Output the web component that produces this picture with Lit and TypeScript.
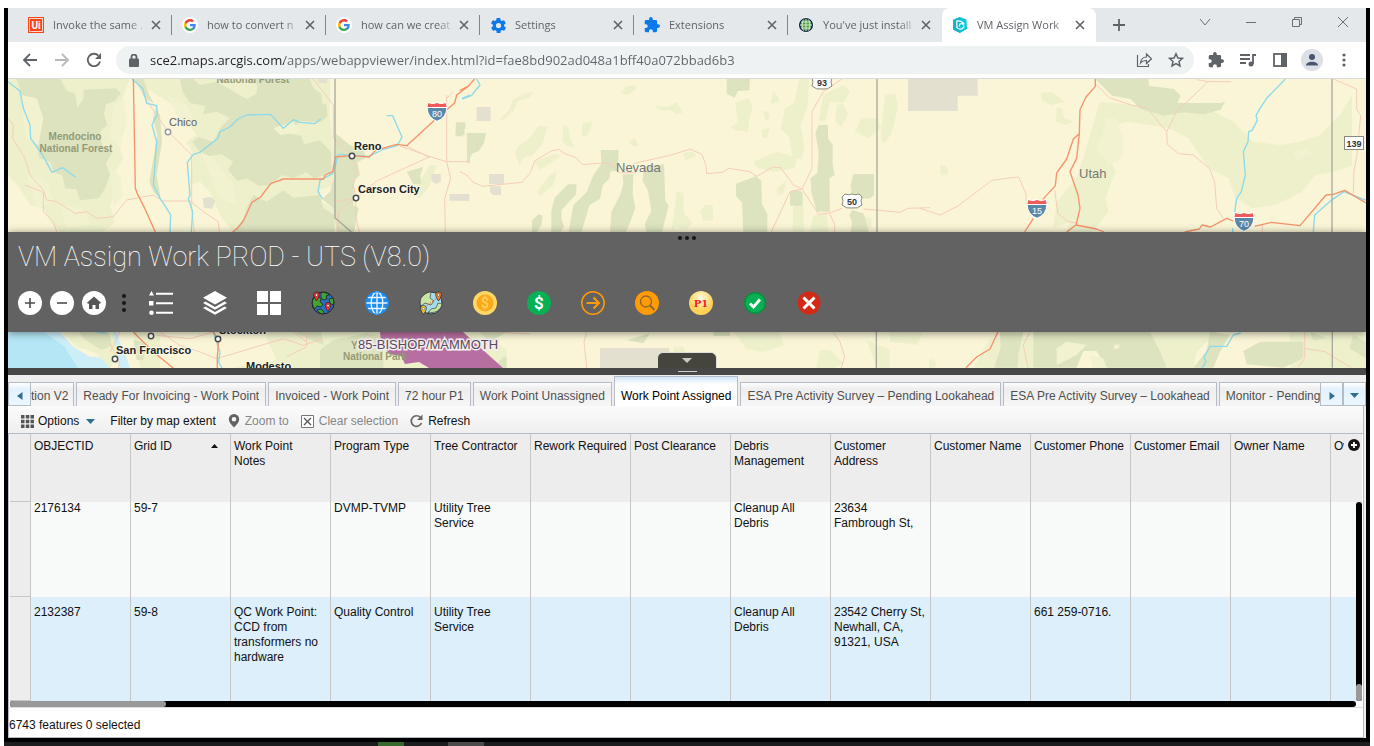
import { LitElement, html, svg, css } from "lit";
import { customElement } from "lit/decorators.js";
import { classMap } from "lit/directives/class-map.js";

/* ---------- browser chrome glyphs ---------- */

const close16 = html`<svg class="x" viewBox="0 0 16 16" width="16" height="16"><path d="M4 4l8 8M12 4l-8 8" /></svg>`;

const favicons: Record<string, unknown> = {
  uipath: html`<svg viewBox="0 0 16 16" width="16" height="16"><rect width="16" height="16" fill="#fa4616" /><rect x="1.5" y="1.5" width="13" height="13" fill="none" stroke="#fff" stroke-width=".8" /><text x="8" y="11.500" text-anchor="middle" font-family="Roboto, sans-serif" font-weight="700" font-size="10" fill="#fff">Ui</text></svg>`,
  google: html`<svg viewBox="0 0 16 16" width="16" height="16"><circle cx="8" cy="8" r="8" fill="#fff" /><g transform="translate(2 2) scale(.25)"><path fill="#4285f4" d="M47 24.5c0-1.6-.2-3.100-.4-4.500H24v9h13c-.6 3-2.300 5.500-4.800 7.200v6h7.700C44.400 38 47 31.800 47 24.500z" /><path fill="#34a853" d="M24 48c6.500 0 11.900-2.100 15.900-5.800l-7.700-6c-2.200 1.500-4.900 2.300-8.200 2.300-6.300 0-11.600-4.200-13.500-9.900H2.600v6.200C6.500 42.600 14.600 48 24 48z" /><path fill="#fbbc05" d="M10.500 28.600c-1-3-1-6.200 0-9.200v-6.200H2.600c-3.400 6.800-3.400 14.800 0 21.600z" /><path fill="#ea4335" d="M24 9.500c3.500 0 6.700 1.200 9.200 3.600l6.900-6.900C35.900 2.400 30.500 0 24 0 14.600 0 6.500 5.400 2.600 13.200l7.900 6.200C12.400 13.700 17.700 9.500 24 9.500z" /></g></svg>`,
  gear: html`<svg viewBox="2 2 20 20" width="15" height="15"><path fill="#0b78ec" d="M19.400 13c0-.3.100-.6.100-1s0-.7-.1-1l2.100-1.600c.2-.2.200-.4.100-.6l-2-3.500c-.1-.2-.4-.3-.6-.2l-2.500 1c-.5-.4-1.100-.7-1.700-1l-.4-2.600c0-.3-.2-.5-.5-.5h-4c-.2 0-.5.2-.5.400l-.4 2.700c-.6.2-1.100.6-1.700 1l-2.500-1c-.2-.1-.5 0-.6.2l-2 3.500c-.1.200-.1.500.1.600L4.600 11c0 .3-.1.700-.1 1s0 .7.100 1l-2.100 1.600c-.2.200-.2.400-.1.600l2 3.500c.1.200.4.300.6.200l2.500-1c.5.400 1.100.7 1.700 1l.4 2.600c0 .3.3.5.5.5h4c.2 0 .5-.2.5-.4l.4-2.700c.6-.2 1.100-.6 1.700-1l2.500 1c.2.100.5 0 .6-.2l2-3.500c.1-.2.1-.5-.1-.6zM12 15.500a3.500 3.500 0 110-7 3.500 3.500 0 010 7z" /></svg>`,
  puzzle: html`<svg viewBox="1 1 22 22" width="16" height="16"><path fill="#0b78ec" d="M20.500 11H19V7a2 2 0 00-2-2h-4V3.500a2.500 2.500 0 00-5 0V5H4a2 2 0 00-2 2v3.800h1.500a2.700 2.700 0 010 5.400H2V20a2 2 0 002 2h3.800v-1.500a2.700 2.700 0 015.400 0V22H17a2 2 0 002-2v-4h1.500a2.500 2.500 0 000-5z" /></svg>`,
  globe: html`<svg viewBox="0 0 16 16" width="16" height="16"><circle cx="8" cy="8" r="7.700" fill="#f4f7f2" /><circle cx="8" cy="8" r="6.300" fill="#4e9a45" stroke="#10284a" stroke-width="1.600" /><path d="M8 2v12M2 8h12M3.200 5h9.600M3.200 11h9.600M5.400 2.600c-1.700 3-1.700 8 0 11M10.600 2.600c1.700 3 1.700 8 0 11" stroke="#dff0d8" stroke-width=".9" fill="none" /></svg>`,
  arcgis: html`<svg viewBox="0 0 16 16" width="16" height="16"><path d="M8 0l6.500 2.500L15 12l-7 4-7-3.500L1 3z" fill="#0cc5dc" /><path d="M1 3l7-3v16l-7-3.500z" fill="#18b2cc" /><path d="M4.800 3.500v6.800c1.700 2.700 6 2.300 7 -.6.600-2.300-2.200-3.900-4.200-2.400l-.4 2.400M4.800 4c3-.4 5.800.8 7.400 3.200" fill="none" stroke="#fff" stroke-width="1.200" /></svg>`,
};

const browserTabs = [
  { icon: "uipath", title: "Invoke the same .", active: false },
  { icon: "google", title: "how to convert n", active: false },
  { icon: "google", title: "how can we creat", active: false },
  { icon: "gear", title: "Settings", active: false },
  { icon: "puzzle", title: "Extensions", active: false },
  { icon: "globe", title: "You've just install", active: false },
  { icon: "arcgis", title: "VM Assign Work", active: true },
];

@customElement("browser-bar")
export class BrowserBar extends LitElement {
  static styles = css`
    :host { display: block; flex: none; font: 12px/16px "Open Sans", "Noto Sans", sans-serif; color: #5f6368; }
    button { border: 0; background: none; padding: 0; color: inherit; font: inherit; display: grid; place-items: center; }
    .strip { display: flex; height: 34px; background: #e5e8eb; padding-left: 10px; }
    .tab { flex: 0 1 154px; min-width: 0; box-sizing: border-box; display: flex; align-items: center; padding: 0 8px 0 10px; position: relative; }
    .tab::after { content: ""; position: absolute; right: 0; top: 7px; height: 20px; width: 1px; background: #80868b; }
    .tab.last::after, .tab.active::after { display: none; }
    .tab.active { background: #fff; border-radius: 8px 8px 0 0; }
    .favicon { width: 16px; height: 16px; display: grid; place-items: center; margin-right: 9px; flex: none; }
    .title { flex: 1; min-width: 0; overflow: hidden; white-space: nowrap; text-align: left; font-size: 11px; mask-image: linear-gradient(90deg, #000 76px, transparent 94px); }
    .x path { stroke: #5f6368; stroke-width: 1.6; fill: none; }
    .new { width: 46px; }
    .gap { flex: 1; }
    .win { width: 46px; height: 28px; color: #6b6f73; }
    .bar { display: flex; align-items: center; height: 36px; padding: 0 6px; background: #fff; border-bottom: 1px solid #d8dade; }
    .bar > button { width: 32px; height: 32px; }
    .omni { flex: 1; height: 28px; border-radius: 14px; background: #eff2f3; margin: 0 6px; display: flex; align-items: center; padding: 0 2px 0 8px; }
    .omni button { width: 32px; height: 28px; }
    .omni .lock { width: 20px; margin-right: 6px; }
    input { flex: 1; min-width: 0; border: 0; outline: 0; padding: 0; font: 13px/20px "Open Sans", "Noto Sans", sans-serif;
      background: linear-gradient(90deg, #202124 134px, #5f6368 134px); background-clip: text; -webkit-background-clip: text; color: transparent; }
    .line { fill: none; stroke: currentColor; stroke-width: 1.8; }
    .off { opacity: 0.45; }
  `;

  render() {
    return html`
      <div class="strip" role="tablist">
        ${browserTabs.map(
          (t, i) => html`<div class=${classMap({ tab: true, active: t.active, last: i === browserTabs.length - 2 })} role="tab" aria-selected=${t.active}>
            <span class="favicon">${favicons[t.icon]}</span><span class="title">${t.title}</span>
            <button aria-label="Close tab">${close16}</button>
          </div>`
        )}
        <button class="new" aria-label="New tab"><svg width="14" height="14" viewBox="0 0 14 14"><path class="line" d="M7 1v12M1 7h12" /></svg></button>
        <span class="gap"></span>
        <button class="win" aria-label="Search tabs"><svg width="12" height="12" viewBox="0 0 12 12"><path d="M1 3l5 6 5-6" fill="none" stroke="currentColor" /></svg></button>
        <button class="win" aria-label="Minimize"><svg width="12" height="12" viewBox="0 0 12 12"><path d="M1 6.500h10" fill="none" stroke="currentColor" /></svg></button>
        <button class="win" aria-label="Restore"><svg width="12" height="12" viewBox="0 0 12 12"><path d="M1.500 3.500h7v7h-7zM3.500 3.500v-2h7v7h-2" fill="none" stroke="currentColor" /></svg></button>
        <button class="win" aria-label="Close"><svg width="12" height="12" viewBox="0 0 12 12"><path d="M1 1l10 10M11 1L1 11" fill="none" stroke="currentColor" /></svg></button>
      </div>
      <div class="bar">
        <button aria-label="Back"><svg width="16" height="16" viewBox="0 0 16 16"><path class="line" d="M15 8H2M8 2L2 8l6 6" /></svg></button>
        <button class="off" aria-label="Forward"><svg width="16" height="16" viewBox="0 0 16 16"><path class="line" d="M1 8h13M8 2l6 6-6 6" /></svg></button>
        <button aria-label="Reload"><svg width="16" height="16" viewBox="0 0 16 16"><path class="line" d="M14 9.500A6.200 6.200 0 1112.500 3.700" /><path d="M15 1v6H9z" fill="currentColor" /></svg></button>
        <div class="omni">
          <button class="lock" aria-label="Site information"><svg width="10" height="13" viewBox="0 0 10 13"><rect x="0" y="4.500" width="10" height="8.500" rx="1" fill="currentColor" /><path d="M2.500 5V3a2.500 2.500 0 015 0v2" class="line" /></svg></button>
          <input aria-label="Address" value="sce2.maps.arcgis.com/apps/webappviewer/index.html?id=fae8bd902ad048a1bff40a072bbad6b3" />
          <button aria-label="Share"><svg width="16" height="16" viewBox="0 0 16 16"><path d="M1.500 3v11.500h11V12M4.500 11c.5-4 3-6 6-6V2l5 4.800-5 4.700V8.500c-2.500 0-4.500.5-6 2.500z" fill="none" stroke="currentColor" stroke-width="1.200" /></svg></button>
          <button aria-label="Bookmark"><svg width="16" height="16" viewBox="0 0 16 16"><path d="M8 1.800l1.900 4.200 4.500.4-3.400 3 1 4.500L8 11.500l-4 2.400 1-4.500-3.400-3 4.500-.4z" fill="none" stroke="currentColor" stroke-width="1.500" /></svg></button>
        </div>
        <button aria-label="Extensions"><svg viewBox="1 1 22 22" width="16" height="16"><path fill="currentColor" d="M20.500 11H19V7a2 2 0 00-2-2h-4V3.500a2.500 2.500 0 00-5 0V5H4a2 2 0 00-2 2v3.800h1.500a2.700 2.700 0 010 5.400H2V20a2 2 0 002 2h3.800v-1.500a2.700 2.700 0 015.400 0V22H17a2 2 0 002-2v-4h1.500a2.500 2.500 0 000-5z" /></svg></button>
        <button aria-label="Media"><svg width="16" height="14" viewBox="0 0 16 14"><path class="line" d="M0 2h10M0 6h10M0 10h6M13 11V2h3" /><circle cx="11" cy="11" r="2.500" fill="currentColor" /></svg></button>
        <button aria-label="Side panel"><svg width="14" height="14" viewBox="0 0 14 14"><rect x="1" y="1" width="12" height="12" class="line" stroke-width="2" /><rect x="8" y="0" width="6" height="14" fill="currentColor" /></svg></button>
        <button aria-label="Profile"><svg width="22" height="22" viewBox="0 0 22 22"><circle cx="11" cy="11" r="11" fill="#dce0e6" /><circle cx="11" cy="8" r="3" fill="#47566e" /><path d="M5 16.500c0-5 12-5 12 0z" fill="#47566e" /></svg></button>
        <button aria-label="Menu"><svg width="4" height="16" viewBox="0 0 4 16"><g fill="currentColor"><circle cx="2" cy="3" r="1.600" /><circle cx="2" cy="8" r="1.600" /><circle cx="2" cy="13" r="1.600" /></g></svg></button>
      </div>
    `;
  }
}

/* ---------- base map ---------- */
/* Each sheet holds its own paths in units of a third of a pixel, offset by its origin. */

interface Sheet { x: number; y: number; light?: string; park?: string; bare?: string; town?: string; road?: string; highway?: string; river?: string; border?: string; water?: string; }

const sheets: Sheet[] = [
  {
    x: 0, y: 75,
    light: "M24 12H390L370 60 360 90 375 160 355 205 370 250 340 300 355 345 330 390 345 440 310 471H180L150 440 130 400 90 390 60 340 24 300ZM400 12H990V140L1005 250V330L960 345 965 380 1000 400 1000 471H700L660 420 630 350 600 320 570 330 580 240 560 200 590 180 555 130 520 90 470 60ZM1010 471V390H1050L1060 471ZM345 140l22-6 3 12-10 18h-8ZM1230 360l60-90h20l-20 60-30 40Z",
    bare: "M60 60l50 10 20 60-15 80-35-20ZM340 90l30-20 10 70-20 80-30-30ZM80 300l60 20 20 60-50 20ZM330 280l30 20 10 60-30 40ZM600 230l40 20 60 80 10 60-50-20ZM500 60l60 30 30 60-40 10ZM180 390l70 10 20 50-70 10ZM820 160l60-20 20 30-60 10Z",
    park: "M50 12H182L200 48 226 56 232 98 250 72 252 44 348 40 362 56 344 78 318 88 312 118 322 150 300 170 306 210 336 232 318 266 330 300 314 342 296 370 240 376 228 342 196 340 186 300 160 292 152 262 118 250 108 196 94 180 108 148 92 112 70 70ZM540 12H580L600 30 650 20 740 72 770 56 772 30 750 12H930L940 40 964 56 966 84 980 90 982 124 964 142 900 138 880 160 850 150 856 174 904 182 912 208 960 196 994 232 994 296 940 310 920 292 880 310 846 300 812 330 776 332 740 310 712 318 684 284 700 260 664 238 610 246 576 200 596 186 640 200 660 160 690 128 650 110 610 118 616 92 570 84 548 50ZM740 400L760 360 800 380 850 346 880 368 960 360 970 400 1004 420V471H700L730 430ZM1008 176L1050 210 1092 228 1096 250 1072 262 1080 300 1062 318 1060 390 1076 400 1062 471H1010L1000 400 966 372 990 350 1008 290ZM404 12L432 66 470 92 458 130 472 180 462 240 448 320 460 350 482 370 470 300 486 200 480 120 448 60 430 12ZM1368 142h28v20h-8l-2 22h-20ZM1402 174h8v90h-8ZM1220 290l50-14-10 26 4 24-24 2Z",
    town: "M608 370l24-4 14 12-10 24-24-4ZM1294 297h28v24l-14 6-14-10ZM1348 357h60v20h-60ZM955 12h26v12h-26Z",
    road: "M24 130L40 150 38 190 75 250 90 300 130 345 140 375 170 380 225 415 260 410 290 430 340 425 380 375 460 360 490 378 570 378 610 410 655 440 658 471M75 330l50 20M130 350v60l30 30 10 31M436 70L500 165 575 240V400L583 471M940 12L1000 90 1000 190 1056 240 1070 290 1060 330 1068 370 1066 420 1078 471M1068 370L1130 318 1290 245 1200 213M1290 245l50 15 70 0M1340 60V260L1352 310 1334 370 1336 471M1220 213l70 35M1005 380l60-10M1015 471v-60l20-20 33-20M1340 70l20-20",
    highway: "M400 12L406 340 412 356 436 404 466 471M1410 30L1370 60 1364 84 1310 130 1220 212 1190 208 1126 226 1108 246 1056 242 1006 246 998 290 976 300 970 312 850 312 812 326 782 366 756 382 730 438 712 460 698 471",
    river: "M24 20L60 48 70 100 90 150 92 190 128 240 156 292 188 278 226 306M396 12L428 40 440 85 470 92 472 118 456 150 470 200 460 330 480 370 500 400 512 420 510 471M962 132L944 146 900 142 880 134 850 160 812 118 740 120 714 132 690 156 660 170 654 190 600 232 580 238 562 262 570 360 565 372 578 410 574 471M1160 122h18L1206 186 1192 212 1148 224 1106 244 1014 238 1004 280 998 296 960 316 954 350 968 372M1386 70l24-10",
    border: "M1005 12V428L1054 471",
  },
  {
    x: 460, y: 75,
    light: "M118 134l30-30 10-30 40-20 20-4-10 18-34 10-14 30-30 26ZM480 54l20-20 30-4-4 14-24 16ZM582 92l40 4 30-14 16 32-20 2-20-12-20 4ZM826 84l40-14 12 30-10 30-4 40-40-4-12-10 22-14ZM930 84l12-36 16 30-20 8ZM1018 12h30l-6 80-20 60 12 70-12 30-24-6-10-60-26-24 12-60 30-20ZM1090 60l60-30 20 20-20 34-40-4-14 60-20-4ZM1130 90l20-4 14 30-20 40-18-16ZM908 108l16 2 6 20-12 8ZM904 166l26-10-10 34-12-4ZM1276 60l30-4 8 40-20 80-20 28-12-10 4-50ZM1184 170l20-40 50 0 10 30-40 30-20-10ZM364 184l4-40 30-4-10 30-12 16ZM306 200l4-50 16 10 4 30 14 26-22-4ZM172 216l34-24 30-40 26 4-14 50-30 34-30 10-10 24-12-40ZM222 260l60-24 20 6-40 28-20 14ZM506 200l20-10 10 24-20-2ZM668 234l30-4 10 12-30 14ZM880 260l70-30 60 18-6 30-60 12-50-10ZM230 350l40-50 20-10-10 40-40 34ZM720 410l14-20 24 0 2 44-30 4ZM950 340l30-24-10 40-18 6ZM1000 390l30 4 2 77h-34ZM1050 471l10-50 40-4 6 54ZM650 350l20 4 2 60 26 30-20 20-30-10-14 17 10-70ZM1204 420l30 10v30h-24Z",
    park: "M800 12h70l-2 34-34 2-10 20-24-12ZM0 140l12 10 2 30-14 4ZM20 174h58l-6 30-16 24-20 8-14 30ZM422 225h54l-2 62-22 2-4 22-20 20-8 40-32 20-10 36-14 44h-38l14-80 40-40 20-50 24-34ZM488 298h32l-2 60 8 40-14 40-14 33h-48l4-60 26-50 10-34ZM552 276l60-8 4 110 10 14-20 79h-46l-6-24 20-40-10-60-16-30ZM274 408l10-40 40-40 26 0-2 30-24 26-20 22 0 24 8 24-10 17h-28ZM216 436l20-18 12 4-4 28-14 21h-14ZM828 326l60-22 16 14 2 70 16 30v53h-72l-4-88-18-20ZM1076 150h28v40l14 20v60l6 30-16 10 2 100-40 0-16-60-2-40 20-16 4-60-10-60ZM990 352l20-8 18 8v40h-38ZM1180 297h62v64l-14 10-52-2-4-40ZM1176 405l34 10 10 30 6 26h-54l4-30-8-20Z",
    town: "M50 96h42v42H50ZM87 297h45v30H87ZM90 334h33v26h-24l-9-10ZM0 357h27v20H0ZM1344 12h209v50h-60v46h-149Z",
    road: "M0 290l20 10 20 22 28 12 118-12 26-30 12-34 50-30 24-5 14 12 34 12 22 22 70-6 20 8 20 22 50 0M520 266L634 240 690 222 726 238 738 272 740 296 788 292 806 280 870 290 890 304 940 276 962 278 1000 330 1026 342 1076 418 1110 414 1146 400M1026 342L1056 280 1056 110 1090 50 1146 12M1026 342L990 350 934 471M1110 418l14 30v23M1210 402L1320 412 1344 400 1410 398",
    highway: "M44 12L24 34 0 46",
    river: "M50 12L60 30 34 62 6 72",
    border: "M1251 12V471",
  },
  {
    x: 920, y: 75,
    light: "M364 54l30-4 40 30-40 10-28-14ZM410 96l16 4 6 30 30 10-30 10-24-10ZM540 80l200 20 120 0 80 40 60 60 80 10 60-10 60-20 60-60 36-60V270l-50 20-60 10-40 50-80 40-70 10-50-30-20-60-60-30-60-90-60-30-120-20-50 10-20 60 30 80-30 80 10 40-50 60-40 60H420l30-90-50 20 10-80 60-70 20-60ZM60 270l20 4 6 20-20 8-6-12Z",
    bare: "M560 130l30 0 20 60-4 60-40 20-20-30 -20-20 20-40ZM1120 230l40-14 20 20-50 20Z",
    park: "M526 12h160v20l76 10 20 20-10 22h130l14-6-14 26-50 14-60-6-60 10-70-20-30-30-56-10-30-30-12ZM258 50h74l22 30 6 22-48 2-52-34ZM484 80h58v76l-30 16h-32ZM560 84l50 0 34 30 8 80 42 30 2 70-30 20-2 40-12 20v40l-30 20-20 37H470l58-90 4-60 46-10 2-30 32-4 0-64-22-30 8-36-36-20ZM490 180l26 14 4 40-6 32-46 2ZM306 158h36l16 24-24 38-28-24ZM364 236l20-8 8 24-4 60 10 10-22 40-46 0v-50l16-10ZM376 352l30 0 4 70 24 49H336l30-60ZM1066 12h30l-20 30-10-10ZM1232 350l40-10 66 40v40l-30 14-40-10-32-20-20 10Z",
    road: "M0 400l60 20 52-26L216 316l44-6 36-4 22 50 0 20M526 26L568 68 640 92 680 98 740 170 742 208 776 236 820 240 868 280 884 320 890 400 910 430M740 170L770 110 864 20 830 14M864 20h70M1240 12l70 30 0 60 12 20-6 60-6 66-8 40-2 70M404 346l10 70 30 24 24 4M1027 450v21",
    highway: "M526 12V34L498 66 480 104 478 176 460 192 440 252 410 294 406 332 368 374M340 430L314 471M478 176L470 250 450 290 474 360 480 400 468 450 440 471M468 450L530 462 552 471M794 471L838 462 846 450 872 456 920 430 940 438M1004 454L1054 442 1140 452 1218 360 1240 358 1274 346 1338 384",
    river: "M1096 12L1040 70 1020 100 1008 122 1012 136 996 166 986 170 984 200 970 230 976 300 964 350 950 370 944 412M938 460v12M1180 471L1184 420 1234 376 1272 350 1338 376",
    border: "M1236 12V471",
  },
  {
    x: 0, y: 230,
    water: "M24 306H180L220 350 270 380 320 384 330 414H24ZM330 306l20 0 10 30 14 30 16 48h-30l-16-30-14-36Z",
    light: "M186 306H340L350 380 330 414 290 370 230 350ZM790 306H1350V414H700L830 390ZM400 306h80v108h-60Z",
    park: "M236 306h90l10 40-30 14-50-30ZM886 306h76l10 40-70-30ZM1000 330l100-20 50 10v94H960V360ZM400 330l40 10-10 50h-20Z",
    road: "M480 306l60 40 60 20 50 20 200-60 60 20 60-20M330 340l30 60-6 14M360 306l-30 60M860 380l60-30 0-44M640 306l-70 20-100-10M880 306l40 30",
    highway: "M652 414V380L656 330 640 306M400 306l60 60 60 48",
    river: "M640 306l20 60-4 30 10 18M290 306l30 4",
  },
  {
    x: 440, y: 230,
    light: "M0 306H120L200 360V414H0ZM880 306l140 0 10 40-60 20-50-10ZM700 350l30 0 10 26-40-4ZM1140 360l30 0 40 40-30 14h-50ZM1280 330l70 30v54h-40Z",
    park: "M120 306h80l-50 30ZM820 306h50v12h-50ZM190 380l10 0v34h-40ZM560 330l70-20-20 30Z",
    town: "M480 354h208v60H480Z",
    road: "M440 306l-8 30 8 78M150 306l120 6M1180 306l20 30 14 44-10 34",
    border: "M1309 306V414",
  },
  {
    x: 890, y: 325,
    light: "M0 20H100L80 60 0 50ZM300 40H430V128H250ZM120 100l20 10-4 18h-20ZM780 20h200l-60 60-10 48h-100ZM1200 20h228v108H1200Z",
    park: "M330 22h70l-14 60-4 46h-70l20-60ZM430 20H780l30 60 20 48H650l-30-50-40 0-20 50H480l-50 0ZM960 20l60 10-30 50-20 48h-60l40-50ZM1110 50h130v50l-60 28-110-10-10-40ZM1260 20l50 20-40 6ZM1390 30l38 20v50l-50-30Z",
    bare: "M500 70l30-20 60 10-30 30-60 30ZM600 90l40 10 10 28h-40ZM672 60l16-2v12l-16 2Z",
    road: "M420 20l-20 40 14 68M1244 20V100l-20 28M1244 70l60 10 80 48",
    highway: "M324 20L300 72 260 96 228 128",
    river: "M1052 24L1030 30 1010 64H960L942 96 948 110 936 128",
    border: "M1327 20V128",
  },
];

const interstate = (x: number, y: number, n: string) => svg`<g transform="translate(${x} ${y})">
  <path d="M-9-10q4 2 9 0q5 2 9 0q2 3 1 8q-1 8-10 12q-9-4-10-12q-1-5 1-8z" fill="#fff"/>
  <path d="M-8.500-9q4 2 8.500 0q4.500 2 8.500 0q1 2 1 4h-19q0-2 1-4z" fill="#f05a5a"/>
  <path d="M-9.300-4h18.600q0 9-9.300 12.800q-9.300-3.800-9.300-12.800z" fill="#5b88a8"/>
  <text y="4.500" text-anchor="middle" class="shield">${n}</text></g>`;
const usRoute = (x: number, y: number, n: string) => svg`<g transform="translate(${x} ${y})">
  <path d="M-7-7q3 1.500 7 0q4 1.500 7 0l3 3q-2 4 0 8q-4 4-10 3q-6 1-10-3q2-4 0-8z" fill="#fff" stroke="#8a8a80"/>
  <text y="4" text-anchor="middle" class="route">${n}</text></g>`;
const city = (x: number, y: number) => svg`<circle cx=${x} cy=${y} r="2.700" fill="#fff" stroke="#4a4a4a" stroke-width="1.500"/>`;

@customElement("base-map")
export class BaseMap extends LitElement {
  static styles = css`
    :host { display: block; }
    svg { display: block; width: 100%; height: 100%; font-family: "Liberation Sans", Arial, sans-serif; }
    .light { fill: #edf0cb; } .park { fill: #dde3bf; } .bare { fill: #f3f2d0; } .town { fill: #e3e0cf; }
    .water { fill: #cdeef7; }
    .road, .highway, .river, .border { fill: none; stroke-linejoin: round; }
    .road { stroke: #f5cdbb; stroke-width: 3; } .highway { stroke: #f6926c; stroke-width: 4; }
    .river { stroke: #8cdaea; stroke-width: 4; } .border { stroke: #a9a89d; stroke-width: 4; }
    .shield { font: 9px "Liberation Sans", sans-serif; fill: #fff; }
    .route { font: bold 9px "Liberation Sans", sans-serif; fill: #333; }
    .forest { font: bold 10px "Liberation Sans", sans-serif; fill: #949a78; }
    .state { font: 13px "Liberation Sans", sans-serif; fill: #77787a; }
    .town-name { font: 11px "Liberation Sans", sans-serif; fill: #5c5c6c; }
    .city { font: bold 11px "Liberation Sans", sans-serif; fill: #222; paint-order: stroke; stroke: #fbf9e6; stroke-width: 2px; }
    .district { font: 13px "Liberation Sans", sans-serif; fill: #5a4a58; paint-order: stroke; stroke: #f4eef2; stroke-width: 3px; }
  `;
  render() {
    const layers = ["water", "light", "park", "bare", "town", "road", "river", "highway", "border"] as const;
    return html`<svg viewBox="8 79 1358 289" preserveAspectRatio="xMidYMin slice" role="img" aria-label="Map">
      <rect x="8" y="79" width="1358" height="289" fill="#f9f5d6" />
      ${sheets.map((s) => svg`<g transform="translate(${s.x} ${s.y}) scale(.3333333)">
        ${layers.map((l) => (s[l] ? svg`<path class=${l} d=${s[l]!}/>` : ""))}</g>`)}
      <path d="M8 332h36l20 14 14 22H8z" fill="#a9e2f4" opacity=".7" />
      <path d="M380 332h83l40 36h-74l-10-6-14 2-4-8-12-2-8-12z" fill="#b66fa0" />
      ${interstate(437, 112, "80")}${interstate(1037, 209, "15")}${interstate(1244, 222, "70")}
      ${usRoute(822, 82, "93")}${usRoute(852, 201, "50")}
      <rect x="1344.500" y="136.500" width="19" height="13" fill="#fff" stroke="#8a8a80" />
      <text x="1354" y="147" text-anchor="middle" class="route">139</text>
      <text x="253" y="83" text-anchor="middle" class="forest">National Forest</text>
      <text x="75" y="140" text-anchor="middle" class="forest">Mendocino</text>
      <text x="76" y="152" text-anchor="middle" class="forest">National Forest</text>
      <text x="169" y="126" class="town-name">Chico</text>
      <circle cx="168" cy="132" r="2.700" fill="#fff" stroke="#9a9a9a" stroke-width="1.500" />
      <text x="616" y="172" class="state">Nevada</text>
      <text x="1079" y="178" class="state">Utah</text>
      <text x="354" y="150" class="city">Reno</text><text x="358" y="193" class="city">Carson City</text>
      <text x="116" y="354" class="city">San Francisco</text><text x="219" y="334" class="city">Stockton</text>
      <text x="246" y="370" class="city">Modesto</text>
      ${city(352, 156)}${city(356, 198)}${city(151, 336)}${city(218, 339)}${city(115, 359)}
      <text x="351" y="349" class="forest">Y</text><text x="343" y="360" class="forest">National Park</text>
      <text x="358" y="349" class="district">85-BISHOP/MAMMOTH</text>
    </svg>`;
  }
}

/* ---------- widget bar ---------- */

const pin = (x: number, y: number, c: string) => svg`<g transform="translate(${x} ${y})"><path d="M0 5.500C-4 0-3.500-3.500 0-3.500S4 0 0 5.500z" fill=${c} stroke="#222" stroke-width=".7"/><circle cy="-.4" r="1.200" fill="#fff" stroke="#222" stroke-width=".4"/></g>`;

const widgets: { name: string; art: unknown }[] = [
  { name: "Legend", art: svg`<g fill="#fff"><path d="M2.500 0L5 4.500H0zM0 10h4.500v4.500H0z"/><circle cx="2.500" cy="21.700" r="2.300"/><path d="M7 1.700h17v2H7zM7 11.200h17v2H7zM7 20.700h17v2H7z"/></g>` },
  { name: "Layer list", art: svg`<g fill="#fff"><path d="M12 0l12 6.800L12 13.500 0 6.800z"/><path d="M0 12l2.500-1.400L12 16l9.500-5.400L24 12l-12 6.800z"/><path d="M0 17l2.500-1.400L12 21l9.500-5.400L24 17l-12 6.800z"/></g>` },
  { name: "Basemap gallery", art: svg`<path fill="#fff" d="M0 0h11v11H0zM13 0h11v11H13zM0 13h11v11H0zM13 13h11v11H13z"/>` },
  { name: "World locations", art: svg`<circle cx="12" cy="12" r="11" fill="#2d6fc0" stroke="#222"/><path d="M2 8c1-2 3-3 5-3l3 3-1 3 3 2-2 3-4-1-2 3C1 15 1 11 2 8zM10 1.500c3-.5 6 .5 8 2.500l-3 1 1 3-4 1-2-3zM18 8l4-1c1 3 1 5 0 7l-3-2zM6 19l4-1 3 3-1 2c-2 0-5-2-6-4z" fill="#3fa535" stroke="#222" stroke-width=".8"/>${pin(5.500, 4.500, "#ee3338")}${pin(17, 15, "#ee3338")}` },
  { name: "Globe", art: svg`<circle cx="12" cy="12" r="11.200" fill="#1c8cf0"/><g fill="none" stroke="#e8f6ff" stroke-width="1.400"><path d="M12 1v22M1 12h22M3 6.500h18M3 17.500h18"/><ellipse cx="12" cy="12" rx="5.800" ry="11"/></g><circle cx="12" cy="12" r="11.200" fill="none" stroke="#1c8cf0" stroke-width="1.200"/>` },
  { name: "Route map", art: svg`<circle cx="12" cy="12" r="11" fill="#a5dcec" stroke="#333"/><path d="M2 7c3-4 7-6 10-6l-1 6 4 3-3 4-6-2-4 3C1 13 1 10 2 7zM9 22l3-4 5-1 2-5 4 1c-1 6-7 10-14 8z" fill="#c7e6a5" stroke="#444" stroke-width=".7"/><path d="M6 16l12-9" stroke="#ee4444" stroke-dasharray="1.500 1.500"/>${pin(19.500, 4.500, "#f5822a")}${pin(4.500, 18, "#f4c53a")}` },
  { name: "Gold coin", art: svg`<circle cx="12" cy="12" r="12" fill="#ffd767"/><circle cx="12" cy="12" r="8.500" fill="#ffa817"/><text x="12" y="17" text-anchor="middle" font-family="Roboto" font-size="14" font-weight="500" fill="#ffd767">$</text>` },
  { name: "Invoice", art: svg`<circle cx="12" cy="12" r="12" fill="#07b053"/><text x="12" y="18" text-anchor="middle" font-family="Roboto" font-size="17" font-weight="700" fill="#fff">$</text>` },
  { name: "Forward work", art: svg`<circle cx="12" cy="12" r="11.200" fill="none" stroke="#ff9c05" stroke-width="1.500"/><path d="M5.500 12h12M12.500 6.500L18 12l-5.500 5.500" fill="none" stroke="#ff9c05" stroke-width="2"/>` },
  { name: "Search", art: svg`<circle cx="12" cy="12" r="12" fill="#ff9c05"/><circle cx="11" cy="10.500" r="5.500" fill="none" stroke="#8a6430" stroke-width="1.300"/><path d="M15 14.500l4.500 4.500" stroke="#8a6430" stroke-width="1.800"/>` },
  { name: "Priority one", art: svg`<defs><radialGradient id="p1" cy=".3"><stop offset="0" stop-color="#fffbe4"/><stop offset="1" stop-color="#ffd257"/></radialGradient></defs><circle cx="12" cy="12" r="12" fill="url(#p1)"/><text x="12" y="16" text-anchor="middle" font-family="DejaVu Serif" font-size="10" font-weight="700" fill="#f31d24">P1</text>` },
  { name: "Approve", art: svg`<circle cx="12" cy="12" r="10.300" fill="#07b053" stroke="#089040" stroke-width="1.500"/><path d="M7 12.500l3.500 3.500L17 8.500" fill="none" stroke="#fff" stroke-width="2.800"/>` },
  { name: "Reject", art: svg`<circle cx="12" cy="12" r="11.500" fill="#d32a17"/><path d="M6.500 6.500l11 11M17.500 6.500l-11 11" stroke="#fff" stroke-width="3"/>` },
];

@customElement("widget-bar")
export class WidgetBar extends LitElement {
  static styles = css`
    :host { display: block; background: #626262; color: #fff; box-shadow: 0 1px 8px rgba(0, 0, 0, 0.45); position: relative; }
    button { border: 0; background: none; padding: 0; display: block; }
    svg { display: block; }
    h1 { margin: 0; padding: 7px 10px 0; font: 100 27px/36px Roboto, Inter, sans-serif; white-space: nowrap; }
    .grip { position: absolute; top: 4px; left: 50%; margin-left: -9px; }
    .row { display: flex; align-items: center; padding: 16px 10px 17px; gap: 8px; }
    .dots { margin: 0 2px 0 8px; }
    .widgets { display: flex; gap: 30px; margin-left: 13px; }
  `;
  render() {
    return html`
      <svg class="grip" width="18" height="4" viewBox="0 0 18 4"><g fill="#161616"><circle cx="2" cy="2" r="2" /><circle cx="9" cy="2" r="2" /><circle cx="16" cy="2" r="2" /></g></svg>
      <h1>VM Assign Work PROD - UTS (V8.0)</h1>
      <div class="row">
        <button aria-label="Zoom in"><svg width="24" height="24" viewBox="0 0 24 24"><circle cx="12" cy="12" r="12" fill="#fff" /><path d="M12 7v10M7 12h10" stroke="#4c4c4c" stroke-width="1.600" /></svg></button>
        <button aria-label="Zoom out"><svg width="24" height="24" viewBox="0 0 24 24"><circle cx="12" cy="12" r="12" fill="#fff" /><path d="M7 12h10" stroke="#4c4c4c" stroke-width="1.600" /></svg></button>
        <button aria-label="Home"><svg width="24" height="24" viewBox="0 0 24 24"><circle cx="12" cy="12" r="12" fill="#fff" /><path d="M12 5.500l7 6.200-1.200 1.200-.8-.7V18h-3.500v-4h-3v4H7v-5.800l-.8.700L5 11.700z" fill="#555" /></svg></button>
        <svg class="dots" width="4" height="18" viewBox="0 0 4 18"><g fill="#161616"><circle cx="2" cy="2" r="2" /><circle cx="2" cy="9" r="2" /><circle cx="2" cy="16" r="2" /></g></svg>
        <div class="widgets">
          ${widgets.map((w) => html`<button aria-label=${w.name}><svg width="24" height="24" viewBox="0 0 24 24">${w.art}</svg></button>`)}
        </div>
      </div>`;
  }
}

/* ---------- attribute table ---------- */

const layerTabs = [
  "tion V2", "Ready For Invoicing - Work Point", "Invoiced - Work Point", "72 hour P1", "Work Point Unassigned",
  "Work Point Assigned", "ESA Pre Activity Survey – Pending Lookahead", "ESA Pre Activity Survey – Lookahead", "Monitor - Pending",
];
const columns = [
  "OBJECTID", "Grid ID", "Work Point\nNotes", "Program Type", "Tree Contractor", "Rework Required", "Post Clearance",
  "Debris\nManagement", "Customer\nAddress", "Customer Name", "Customer Phone", "Customer Email", "Owner Name", "Ow",
];
const rows = [
  ["2176134", "59-7", "", "DVMP-TVMP", "Utility Tree Service", "", "", "Cleanup All Debris", "23634\nFambrough St,", "", "", "", "", ""],
  ["2132387", "59-8", "QC Work Point: CCD from transformers no hardware", "Quality Control", "Utility Tree Service", "", "", "Cleanup All Debris", "23542 Cherry St,\nNewhall, CA,\n91321, USA", "", "661 259-0716.", "", "", ""],
];

@customElement("attribute-table")
export class AttributeTable extends LitElement {
  static styles = css`
    :host { display: flex; flex-direction: column; min-height: 0; background: #eee; font: 12px/15px "Liberation Sans", Arial, sans-serif; color: #111; }
    button { border: 0; background: none; padding: 0; font: inherit; color: inherit; white-space: nowrap; }
    svg { display: block; }
    .splitter { height: 7px; background: #474747; display: grid; place-items: center; }
    .splitter i { width: 19px; height: 1px; background: #cfcfcf; }
    .tabs { display: flex; align-items: flex-end; height: 31px; }
    .list { flex: 1; min-width: 0; overflow: hidden; display: flex; align-items: flex-end; gap: 2px; }
    .tab { flex: none; box-sizing: border-box; height: 24px; padding: 3px 6px 0; border: 1px solid #b5bcc7; border-bottom: 0; background: linear-gradient(#fdfdfd, #eee 6px, #f6f6f6); color: #4f4f4f; }
    .tab.cut { padding-left: 0; padding-right: 5px; border-left: 0; }
    .tab.active { height: 30px; padding-top: 9px; background: linear-gradient(#cfe5fa, #fff 7px); color: #000; }
    .nav { flex: none; box-sizing: border-box; width: 23px; height: 24px; padding-top: 3px; border: 1px solid #b5bcc7; background: linear-gradient(#fff, #e3f1fd 6px, #ecf6ff); display: grid; place-items: center; }
    .tools { display: flex; align-items: center; height: 28px; padding: 3px 12px 0 13px; box-sizing: border-box; background: linear-gradient(#fbfbfb, #efefef); border: solid #b5bcc7; border-width: 0 1px 1px 0; margin-right: 2px; }
    .tools button { display: flex; align-items: center; gap: 5px; margin-right: 12px; }
    .tools .wide { margin-right: 15px; gap: 4px; }
    .tools .dim { color: #868686; }
    .tools .caret { margin-left: 3px; }
    .body { flex: 1; min-height: 0; display: flex; flex-direction: column; margin-right: 2px; border: 1px solid #b5bcc7; border-top: 0; background: #fff; }
    .grid { flex: 1; min-height: 0; display: flex; flex-direction: column; overflow: hidden; position: relative; margin-right: 1px; padding-left: 1px; background: #fff; }
    table { flex: 1; min-height: 0; display: flex; flex-direction: column; }
    thead { flex: none; display: block; background: #ededed; }
    tbody { flex: 1; min-height: 0; overflow: hidden; display: flex; flex-direction: column; justify-content: flex-end; }
    tr { flex: none; display: grid; grid-template-columns: 21px repeat(14, 100px); }
    th, td { box-sizing: border-box; border-right: 1px solid #c6c6c6; text-align: left; font-weight: 400; white-space: pre-line; }
    th { height: 68px; padding: 5px 2px 0 3px; }
    td { height: 104px; padding: 8px 4px 0 3px; background: #f7faf9; }
    tr.even td { background: #dceffb; }
    td.handle, tr.even td.handle { background: #ededed; border-bottom: 1px solid #c6c6c6; }
    th.handle { border-bottom: 1px solid #c6c6c6; }
    th.sorted { display: flex; justify-content: space-between; padding-right: 12px; }
    th.sorted svg { margin-top: 5px; }
    .add { position: absolute; top: 3px; right: 2px; background: #ededed; padding-left: 4px; height: 16px; }
    .vbar { position: absolute; right: 0; top: 68px; bottom: 0; width: 6px; border-radius: 3px; background: #000; display: flex; align-items: flex-end; }
    .vbar i { width: 6px; height: 17px; border-radius: 3px; background: #999; }
    .hbar { flex: none; height: 6px; margin: 0 7px 0 1px; border-radius: 3px; background: #000; }
    .hbar i { display: block; width: 156px; height: 6px; border-radius: 3px; background: #999; }
    .status { flex: none; height: 29px; line-height: 35px; border-top: 1px solid #ddd; }
  `;
  render() {
    return html`
      <div class="splitter"><i></i></div>
      <div class="tabs">
        <button class="nav" aria-label="Scroll left"><svg width="6" height="8" viewBox="0 0 6 8"><path d="M5.500 0v8L0 4z" fill="#2d6f92" /></svg></button>
        <div class="list" role="tablist">
          ${layerTabs.map((t, i) => html`<button role="tab" aria-selected=${i === 5} class=${classMap({ tab: true, cut: i === 0, active: i === 5 })}>${t}</button>`)}
        </div>
        <button class="nav" aria-label="Scroll right"><svg width="6" height="8" viewBox="0 0 6 8"><path d="M.5 0v8L6 4z" fill="#2d6f92" /></svg></button>
        <button class="nav" aria-label="All tabs"><svg width="9" height="5" viewBox="0 0 9 5"><path d="M0 0h9L4.500 5z" fill="#2d6f92" /></svg></button>
      </div>
      <div class="tools">
        <button class="wide"><svg width="13" height="13" viewBox="0 0 13 13"><path fill="#555" d="M0 0h3.500v3.500H0zM4.800 0h3.500v3.500H4.800zM9.500 0H13v3.500H9.500zM0 4.800h3.500v3.500H0zM4.800 4.800h3.500v3.500H4.800zM9.500 4.800H13v3.500H9.500zM0 9.500h3.500V13H0zM4.800 9.500h3.500V13H4.800zM9.500 9.500H13V13H9.500z" /></svg>Options<svg class="caret" width="9" height="5" viewBox="0 0 9 5"><path d="M0 0h9L4.500 5z" fill="#2d6f92" /></svg></button>
        <button>Filter by map extent</button>
        <button class="dim"><svg width="12" height="14" viewBox="0 0 12 14"><path fill="#626262" fill-rule="evenodd" d="M6 13.500C3 10 .8 8 .8 5.200a5.200 5.200 0 0110.400 0C11.200 8 9 10 6 13.500zM6 3a2.300 2.300 0 100 4.600A2.300 2.300 0 006 3z" /></svg>Zoom to</button>
        <button class="dim"><svg width="13" height="13" viewBox="0 0 13 13"><path d="M.5.5h12v12H.5z" fill="#fff" stroke="#777" /><path d="M3 3l7 7M10 3l-7 7" stroke="#555" stroke-width="1.300" /></svg>Clear selection</button>
        <button><svg width="13" height="14" viewBox="0 0 13 14"><path d="M11.500 9A5.300 5.300 0 1110.500 3.500" fill="none" stroke="#666" stroke-width="1.700" /><path d="M12.500.5V6H7z" fill="#666" /></svg>Refresh</button>
      </div>
      <div class="body">
        <div class="grid">
          <table cellspacing="0">
            <thead><tr><th class="handle"></th>
              ${columns.map((c, i) => (i === 1 ? html`<th class="sorted" aria-sort="ascending">${c}<svg width="7" height="4" viewBox="0 0 7 4"><path d="M0 4h7L3.500 0z" fill="#111" /></svg></th>` : html`<th>${c}</th>`))}
            </tr></thead>
            <tbody>
              ${rows.map((r, i) => html`<tr class=${classMap({ even: i === 1 })}><td class="handle"></td>${r.map((v) => html`<td>${v}</td>`)}</tr>`)}
            </tbody>
          </table>
          <button class="add" aria-label="Choose columns"><svg width="12" height="12" viewBox="0 0 12 12"><circle cx="6" cy="6" r="6" fill="#161616" /><path d="M6 3v6M3 6h6" stroke="#fff" stroke-width="1.800" /></svg></button>
          <div class="vbar"><i></i></div>
        </div>
        <div class="hbar"><i></i></div>
        <div class="status">6743 features 0 selected</div>
      </div>`;
  }
}

/* ---------- page ---------- */

@customElement("app-root")
export class AppRoot extends LitElement {
  static styles = css`
    :host { display: flex; flex-direction: column; box-sizing: border-box; height: 100vh; padding: 8px 4px 0; background: #fff; overflow: hidden; }
    .window { flex: 1; min-height: 0; display: flex; flex-direction: column; border: solid #000; border-width: 0 4px 4px; }
    .map { flex: none; position: relative; padding: 153px 0 36px; overflow: hidden; }
    base-map { position: absolute; inset: 0; }
    .toggle { position: absolute; left: 50%; bottom: 0; margin-left: -30px; width: 60px; height: 16px; box-sizing: border-box; padding: 0; border: 1px solid #e0e0d8; border-bottom: 0; border-radius: 6px 6px 0 0; background: #45443d; display: grid; place-items: center; }
    attribute-table { flex: 1; }
    .taskbar { flex: none; height: 4px; background: #1c1d1f; display: flex; gap: 44px; padding-left: 374px; }
    .taskbar i { width: 26px; background: #37692f; }
    .taskbar i + i { width: 36px; background: #4b4b4b; }
  `;
  render() {
    return html`
      <div class="window">
        <browser-bar></browser-bar>
        <div class="map">
          <base-map></base-map>
          <widget-bar></widget-bar>
          <button class="toggle" aria-label="Close attribute table"><svg width="10" height="6" viewBox="0 0 10 6"><path d="M0 0h10L5 5z" fill="#c9c9c0" /></svg></button>
        </div>
        <attribute-table></attribute-table>
      </div>
      <div class="taskbar"><i></i><i></i></div>`;
  }
}
